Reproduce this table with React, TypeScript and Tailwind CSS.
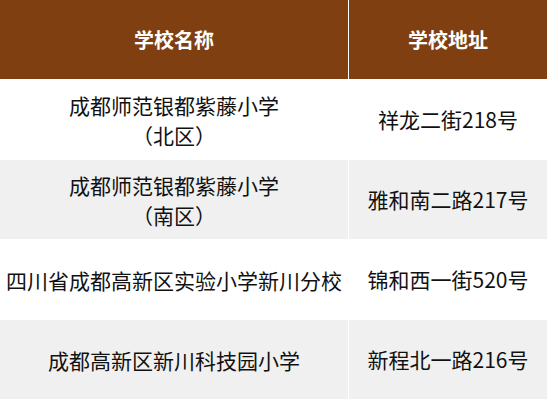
const rows = [
  { name: ["成都师范银都紫藤小学", "（北区）"], addr: "祥龙二街218号", gray: false },
  { name: ["成都师范银都紫藤小学", "（南区）"], addr: "雅和南二路217号", gray: true },
  { name: ["四川省成都高新区实验小学新川分校"], addr: "锦和西一街520号", gray: false },
  { name: ["成都高新区新川科技园小学"], addr: "新程北一路216号", gray: true },
];

export default function App() {
  return (
    <div
      className="w-[547px] h-[401px] bg-white overflow-hidden"
      style={{ fontFamily: '"Noto Sans CJK SC", "Noto Sans", sans-serif' }}
    >
      <div className="grid grid-cols-[348px_198px] gap-px bg-white">
        <div className="h-[79px] bg-[#7f3f10] flex items-center justify-center text-white font-bold text-[20px]">
          学校名称
        </div>
        <div className="h-[79px] bg-[#7f3f10] flex items-center justify-center text-white font-bold text-[20px]">
          学校地址
        </div>
        {rows.map((r, i) => (
          <div key={i} className="contents">
            <div
              className={
                "h-[79px] flex flex-col items-center justify-center text-[21px] leading-[30px] text-[#111] " +
                (r.gray ? "bg-[#f0f0f0]" : "bg-white")
              }
            >
              {r.name.map((t) => (
                <span key={t}>{t}</span>
              ))}
            </div>
            <div
              className={
                "h-[79px] flex items-center justify-center text-[21px] text-[#111] " +
                (r.gray ? "bg-[#f0f0f0]" : "bg-white")
              }
            >
              {r.addr}
            </div>
          </div>
        ))}
      </div>
    </div>
  );
}
